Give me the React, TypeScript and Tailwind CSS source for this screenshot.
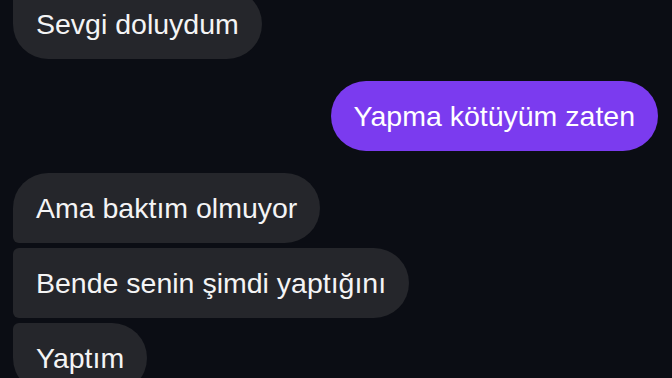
const Bubble = ({ text, className }: { text: string; className: string }) => {
  return (
    <div
      className={`px-[23px] py-[18px] text-[28.5px] leading-[34px] whitespace-nowrap ${className}`}
    >
      {text}
    </div>
  );
};

export default function App() {
  return (
    <div
      className="w-[672px] h-[378px] overflow-hidden bg-[#0b0d14] text-[#f4f4f5]"
      style={{ fontFamily: '"Liberation Sans", Arial, sans-serif' }}
    >
      <div className="flex flex-col pl-[13px] pr-[14px] -mt-[11px]">
        {/* received */}
        <Bubble
          text="Sevgi doluydum"
          className="self-start bg-[#25262b] rounded-[35px] rounded-tl-[6px]"
        />

        {/* sent */}
        <Bubble
          text="Yapma kötüyüm zaten"
          className="self-end mt-[22px] bg-[#7b3bef] text-white rounded-[35px]"
        />

        {/* received group */}
        <div className="flex flex-col items-start gap-[5px] mt-[22px]">
          <Bubble
            text="Ama baktım olmuyor"
            className="bg-[#25262b] rounded-[35px] rounded-bl-[6px]"
          />
          <Bubble
            text="Bende senin şimdi yaptığını"
            className="bg-[#25262b] rounded-[35px] rounded-l-[6px]"
          />
          <Bubble
            text="Yaptım"
            className="bg-[#25262b] rounded-[35px] rounded-tl-[6px]"
          />
        </div>
      </div>
    </div>
  );
}
